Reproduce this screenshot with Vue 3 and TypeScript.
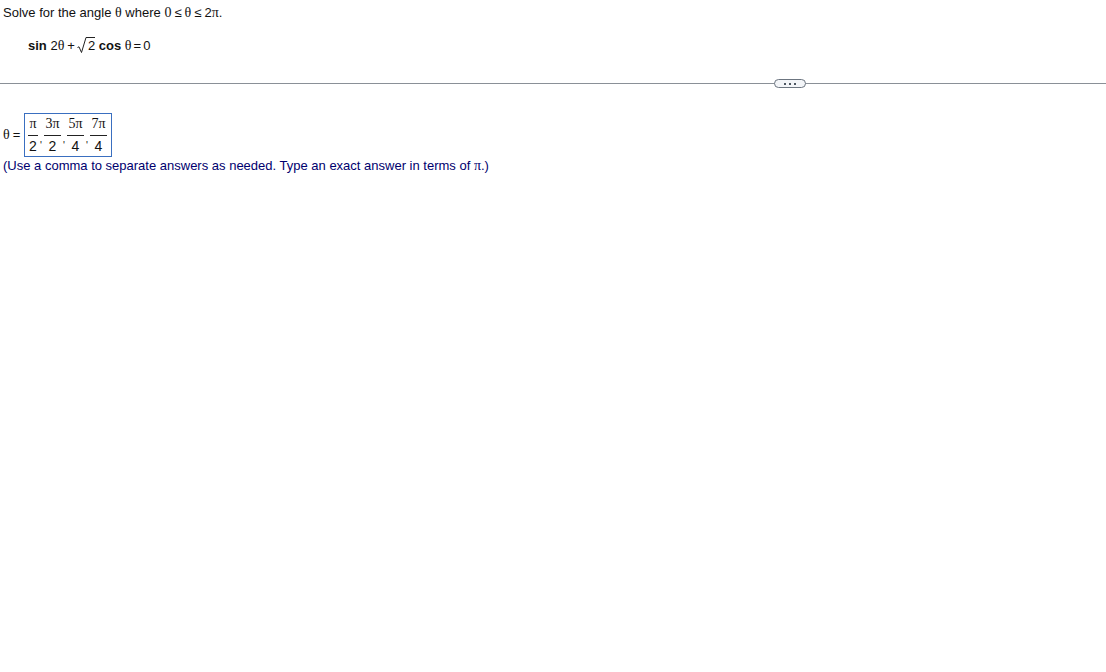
<script setup lang="ts">
interface Frac { n: string; d: string; w: number }
const fracs: Frac[] = [
  { n: 'π', d: '2', w: 10 },
  { n: '3π', d: '2', w: 17 },
  { n: '5π', d: '4', w: 17 },
  { n: '7π', d: '4', w: 17 },
]
</script>

<template>
  <div class="page">
    <p class="question">Solve for the angle <span class="m">θ</span> where <span class="m">0</span><span class="op">≤</span><span class="m">θ</span><span class="op">≤</span>2<span class="m">π</span>.</p>
    <p class="equation"><b>sin</b> 2<span class="m">θ</span><span class="plus">+</span><span class="sqrt"><svg width="10" height="18" viewBox="0 0 10 18"><path d="M0.5 11.5 L2 10.8 L4.5 16.5 L9 1.5 L10 1.5" fill="none" stroke="#222" stroke-width="1"/></svg><span class="radicand">2</span></span> <b>cos</b> <span class="m">θ</span><span class="op tight">=</span>0</p>
    <div class="divider">
      <button class="more" type="button" aria-label="More"><i></i><i></i><i></i></button>
    </div>
    <div class="answer">
      <span class="lhs"><span class="m">θ</span><span class="op">=</span></span>
      <div class="box">
        <template v-for="(f, i) in fracs" :key="i">
          <span v-if="i > 0" class="comma">'</span>
          <span class="frac" :style="{ width: f.w + 'px' }"><span class="num m">{{ f.n }}</span><span class="den">{{ f.d }}</span></span>
        </template>
      </div>
    </div>
    <p class="hint">(Use a comma to separate answers as needed. Type an exact answer in terms of <span class="m">π</span>.)</p>
  </div>
</template>

<style scoped>
.page {
  font-family: "Liberation Sans", Arial, sans-serif;
  font-size: 13px;
  color: #111;
  width: 1106px;
  height: 672px;
  overflow: hidden;
  background: #fff;
}
p { margin: 0; }
.m { font-family: "Liberation Serif", "DejaVu Serif", serif; font-size: 14px; }
.op { margin: 0 3px; }
.op.tight { margin: 0 2px; }
.plus { margin: 0 2px 0 3px; }
.question {
  padding: 5px 0 0 3px;
  height: 25px;
  line-height: 15px;
  box-sizing: border-box;
}
.equation {
  height: 22px;
  margin-top: 11px;
  padding-left: 28px;
  line-height: 20px;
  white-space: pre;
}
.sqrt {
  display: inline-flex;
  align-items: flex-start;
  height: 18px;
  vertical-align: -4px;
}
.radicand {
  border-top: 1px solid #222;
  line-height: 15px;
  height: 16px;
  margin-top: 1px;
  padding: 0 0 0 1px;
}
.divider {
  position: relative;
  height: 1px;
  margin-top: 25px;
  background: #8a9097;
}
.more {
  position: absolute;
  left: 774px;
  top: -4px;
  width: 32px;
  height: 9px;
  padding: 0;
  border: 1px solid #6c7580;
  border-radius: 5px;
  background: #f3f5f8;
  display: flex;
  align-items: center;
  justify-content: center;
  gap: 3px;
}
.more i {
  width: 2px;
  height: 2px;
  background: #4d5661;
}
.answer {
  display: flex;
  align-items: center;
  margin-top: 29px;
  padding-left: 3px;
}
.lhs {
  width: 21px;
  white-space: pre;
}
.box {
  display: flex;
  align-items: flex-start;
  height: 42px;
  padding: 0 4px 0 3px;
  border: 1px solid #3a6fc0;
}
.comma {
  width: 6px;
  margin-top: 23px;
  padding-top: 3px;
  font-size: 10px;
  line-height: 12px;
  text-align: center;
}
.frac {
  display: block;
}
.num, .den {
  display: block;
  text-align: center;
  white-space: nowrap;
}
.num {
  box-sizing: border-box;
  height: 22px;
  padding-top: 1px;
  line-height: 17px;
  border-bottom: 1px solid #222;
  font-size: 14px;
}
.den {
  padding-top: 2px;
  line-height: 17px;
  font-size: 14px;
}
.hint {
  margin-top: 1px;
  padding-left: 3px;
  line-height: 15px;
  color: #00006e;
}
</style>
